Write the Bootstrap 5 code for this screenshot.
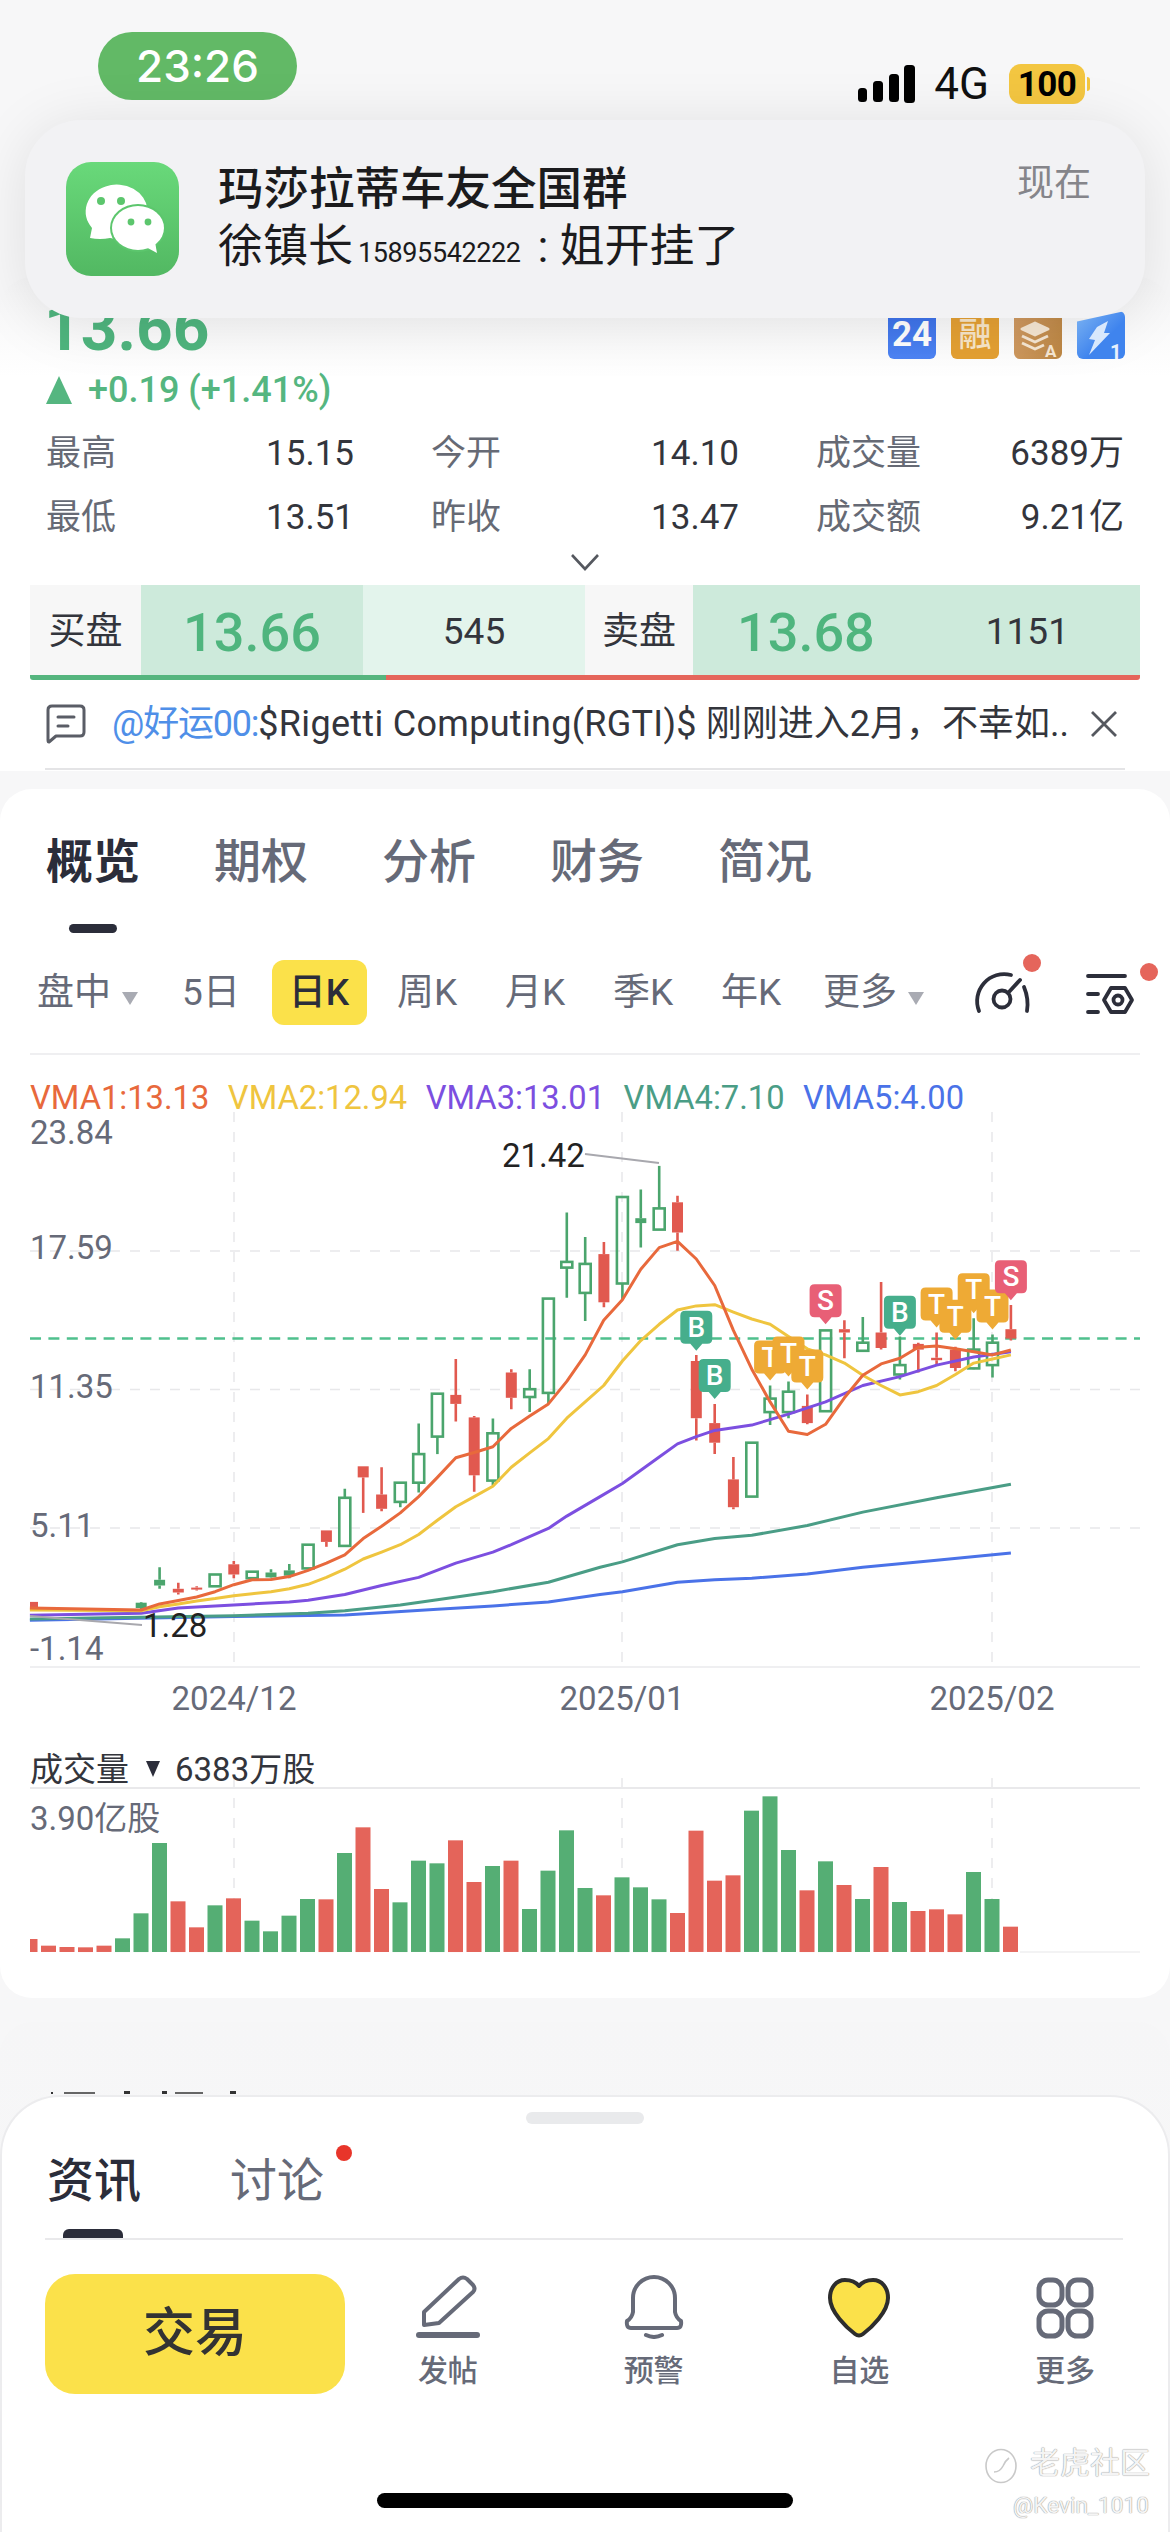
<!DOCTYPE html>
<html lang="zh">
<head>
<meta charset="UTF-8">
<title>RGTI</title>
<link href="https://cdn.jsdelivr.net/npm/bootstrap@5.3.0/dist/css/bootstrap.min.css" rel="stylesheet">
<style>
body { margin: 0; background: #f7f7f8; font-family: Roboto, "Noto Sans CJK SC", sans-serif; color: #333; }
.phone { position: relative; width: 1170px; height: 2532px; overflow: hidden; background: #f7f7f8; }

.status-row { height: 277px; padding: 32px 85px 0 98px; }
.clock-pill { width: 199px; height: 68px; border-radius: 34px; background: #62b966; color: #fff; font: 500 44px Inter, sans-serif; }
.status-right { margin-top: 26px; }
.net-text { font: 400 44px Roboto, sans-serif; color: #111; margin: 0 20px 0 18px; }
.batt { width: 76px; height: 40px; border-radius: 12px; background: #f3c641; font: 700 35px Roboto, sans-serif; color: #000; letter-spacing: -.5px; position: relative; }
.batt::after { content: ""; position: absolute; left: 78px; top: 13px; width: 3px; height: 14px; border-radius: 0 3px 3px 0; background: #f3c641; }

.notice { position: absolute; left: 25px; top: 120px; width: 1120px; height: 198px; z-index: 5; border-radius: 56px; background: #f2f2f4; box-shadow: 0 6px 60px rgba(0,0,0,.1); padding: 42px 54px 0 41px; }
.notice-icon { width: 113px; height: 114px; margin-right: 39px; flex: none; }
.notice-title { font-size: 45.5px; font-weight: 500; line-height: 56px; color: #1b1b1d; }
.notice-line { font-size: 45px; line-height: 54px; color: #1b1b1d; margin-top: 2px; }
.notice-num { font-size: 27px; letter-spacing: -.4px; margin: 0 17px 0 5px; }
.notice-time { font-size: 37px; color: #85858a; line-height: 44px; }

.panel { background: #fff; border-radius: 32px; }
.quote-panel { height: 494px; background: linear-gradient(#f5f5f6, #fff 100px); border-radius: 32px 32px 0 0; }
.price-row { height: 82px; padding: 22px 45px 0 44px; }
.price-big { font-size: 64px; font-weight: 700; line-height: 60px; color: #4fb57e; }
.tile-gap { gap: 15px; }
.tile { width: 48px; height: 48px; border-radius: 6px; color: #fff; font-weight: 700; font-size: 35px; }
.tile-blue { background: linear-gradient(#3c70e8, #4d84f4); }
.tile-orange { background: #e4a033; color: #f8e6c8; font-size: 33px; font-weight: 500; }
.tile-tan { background: linear-gradient(100deg, #d09a62, #bd8744); }
.tile-bolt { position: relative; z-index: 6; background: linear-gradient(135deg, #7db4f2, #3f84ee 60%); clip-path: polygon(0 22%, 100% 0, 100% 100%, 0 100%); }
.change-row { height: 36px; margin-top: 13px; padding-left: 46px; color: #55b680; font-size: 36px; font-weight: 500; }
.stat-grid { display: grid; grid-template-columns: repeat(3, 308px); column-gap: 77px; grid-auto-rows: 64px; padding: 14px 0 0 46px; font-size: 35px; align-items: center; }
.stat-name { color: #666a75; }
.stat-val { color: #33353c; }
.chev-row { height: 35px; padding-top: 3px; }
.book { margin: 0 30px; height: 90px; font-size: 37px; color: #33353c; padding: 0; }
.book-cell { padding-top: 4px; }
.book-label { background: #f7f7f7; }
.book-buy { width: 111px; }
.book-sell { width: 108px; }
.book-dark { background: #cdeadb; }
.book-bid { width: 222px; }
.book-pale { background: #e3f4ec; width: 222px; }
.book-ask { width: 447px; padding-left: 44px; }
.book-price { color: #4fb57e; font-size: 54px; font-weight: 500; }
.book-size { font-size: 37px; font-weight: 400; color: #33353c; }
.book-ask .book-size { margin-left: 111px; }
.book-line { margin: 0 30px; height: 5px; border-radius: 0 0 3px 3px; overflow: hidden; }
.line-buy { width: 356px; background: #55b57e; }
.line-sell { background: #e5655b; }
.news-row { margin: 0 45px; height: 90px; border-bottom: 2px solid #e4e4e6; font-size: 36px; color: #33353c; white-space: nowrap; }
.news-icon { margin: 0 26px 0 1px; flex: none; }
.news-close { margin-right: 7px; }
.at-name { color: #4f8fe8; letter-spacing: -1.2px; }
.ticker { letter-spacing: .3px; }

.chart-panel { height: 1209px; margin-top: 18px; }
.tab-row { padding: 37px 0 0 46px; gap: 74px; font-size: 47px; line-height: 72px; color: #666a78; font-weight: 500; }
.tab-on { color: #2b2d3a; font-weight: 700; }
.tab-bar { width: 48px; height: 9px; border-radius: 5px; background: #2b2d3a; margin: 26px 0 0 69px; }
.period-row { height: 65px; margin: 27px 30px 0 0; padding-left: 37px; font-size: 37px; color: #666a78; }
.period-first { width: 120px; }
.period-more { margin-left: 18px; }
.period-item { width: 108px; }
.period-on { width: 95px; height: 65px; border-radius: 12px; background: #fbe14a; color: #2b2d3a; font-weight: 500; }
.caret-down { display: inline-block; border: 8px solid transparent; border-top: 13px solid #a9abb3; border-bottom: 0; margin-left: 11px; }
.icon-gauge, .icon-tune { overflow: visible; }
.icon-tune { margin: 0 -25px 0 45px; }
.legend-row { margin: 28px 30px 0; border-top: 2px solid #efeff1; height: 59px; padding-top: 24px; gap: 18.5px; font-size: 32.7px; line-height: 38px; }
.vma1 { color: #e8693c; }
.vma2 { color: #efc53f; }
.vma3 { color: #7c4fe0; }
.vma4 { color: #4a9d86; }
.vma5 { color: #4a72e8; }
.chart-svg { display: block; width: 1170px; height: 848px; }
.chart-svg text { font-family: Roboto, "Noto Sans CJK SC", sans-serif; }

.peek-panel { height: 400px; margin-top: 24px; background: linear-gradient(#f6f6f7, #f8f8f9); position: relative; }
.peek-ticks { position: absolute; left: 0; top: 68px; }

.sheet { position: absolute; left: 0; top: 2095px; width: 1170px; height: 437px; z-index: 4; background: #fff; border: 2px solid #ececee; border-bottom: 0; border-radius: 60px 60px 0 0; }
.sheet-handle { width: 118px; height: 12px; border-radius: 6px; background: #e9eaec; margin: 15px 0 0 524px; }
.sheet-tabs { margin-top: 26px; padding-left: 45px; gap: 89px; font-size: 47px; line-height: 62px; color: #666a78; }
.sheet-on { color: #2b2d3a; font-weight: 500; }
.sheet-dot { position: absolute; left: 106px; top: -5px; width: 16px; height: 16px; border-radius: 50%; background: #e8352a; }
.sheet-bar { width: 60px; height: 9px; border-radius: 6px 6px 0 0; background: #2b2d3a; margin: 17px 0 0 61px; }
.sheet-rule { height: 2px; background: #e9e9eb; margin: 0 45px 0 43px; }
.tool-row { margin: 34px 0 0 43px; }
.trade-btn { width: 300px; height: 120px; border-radius: 30px; background: #fbe14a; border: 0; font-size: 52px; font-weight: 500; color: #333; flex: none; }
.tool-item { width: 206px; font-size: 30px; font-weight: 500; line-height: 38px; color: #666a78; }
.tool-item svg { display: block; width: 64px; height: 65px; margin-bottom: 13px; }
.home-bar { position: absolute; left: 377px; top: 2493px; width: 416px; height: 15px; border-radius: 8px; background: #000; z-index: 6; }
.mark-a, .mark-b { position: absolute; z-index: 6; color: #f4f4f4; text-shadow: 0 0 1px #9a9a9a, 0 0 1px #9a9a9a; white-space: nowrap; }
.mark-a { left: 1030px; top: 2442px; font-size: 30px; line-height: 42px; }
.mark-b { left: 1013px; top: 2492px; font-size: 22.6px; line-height: 28px; }
.mark-ring { position: absolute; left: 984px; top: 2448px; z-index: 6; }
</style>
</head>
<body>
<div class="phone">

  <div class="status-row d-flex justify-content-between align-items-start">
    <div class="clock-pill d-flex align-items-center justify-content-center">23:26</div>
    <div class="status-right d-flex align-items-center">
      <svg width="58" height="38" viewBox="0 0 58 38"><rect x="0" y="23" width="9" height="14" rx="3.5"/><rect x="15" y="16" width="10" height="21" rx="3.5"/><rect x="31" y="9" width="10" height="28" rx="3.5"/><rect x="46" y="0" width="11" height="38" rx="3.5"/></svg>
      <span class="net-text">4G</span>
      <span class="batt d-flex align-items-center justify-content-center">100</span>
    </div>
  </div>

  <div class="notice d-flex">
    <svg class="notice-icon" viewBox="0 0 113 114">
      <defs><linearGradient id="wx" x1="0" y1="0" x2="0" y2="1"><stop offset="0" stop-color="#69d97a"/><stop offset="1" stop-color="#52b862"/></linearGradient></defs>
      <rect width="113" height="114" rx="25" fill="url(#wx)"/>
      <path d="M24 76 L26 66 A31 27 0 1 1 44 76 Q34 78 24 76Z" fill="#fff"/>
      <ellipse cx="72" cy="66" rx="28" ry="24" fill="#5cc66d"/>
      <ellipse cx="72" cy="66" rx="26" ry="22" fill="#fff"/>
      <path d="M78 84 L91 91 L89 80Z" fill="#fff"/>
      <circle cx="35" cy="39" r="4" fill="#5cc66d"/><circle cx="55" cy="39" r="4" fill="#5cc66d"/>
      <circle cx="65" cy="60" r="3.4" fill="#5cc66d"/><circle cx="82" cy="60" r="3.4" fill="#5cc66d"/>
    </svg>
    <div class="flex-grow-1">
      <div class="notice-title">玛莎拉蒂车友全国群</div>
      <div class="notice-line">徐镇长<span class="notice-num">15895542222</span>: 姐开挂了</div>
    </div>
    <div class="notice-time">现在</div>
  </div>

  <div class="panel quote-panel">
    <div class="price-row d-flex justify-content-between align-items-end">
      <div class="price-big">13.66</div>
      <div class="tile-gap d-flex">
        <div class="tile tile-blue d-flex align-items-center justify-content-center">24</div>
        <div class="tile tile-orange d-flex align-items-center justify-content-center">融</div>
        <div class="tile tile-tan">
          <svg width="48" height="48" viewBox="0 0 48 48" fill="none" stroke="#f6e7d3" stroke-width="3" stroke-linejoin="round"><path d="M8 14 L21 8 L34 14 L21 20Z" fill="#f6e7d3"/><path d="M8 21 L21 27 L34 21"/><path d="M8 28 L21 34 L30 30"/><text x="31" y="42" font-size="17" font-weight="700" fill="#f6e7d3" stroke="none" font-family="Roboto, sans-serif">A</text></svg>
        </div>
        <div class="tile tile-bolt">
          <svg width="48" height="48" viewBox="0 0 48 48"><path d="M20 12 L31 6 L27 18 L33 18 L12 40 L18 25 L12 24Z" fill="#d8e8fc"/><text x="33" y="44" font-size="20" font-weight="700" fill="#e6f0fd" font-family="Roboto, sans-serif">1</text></svg>
        </div>
      </div>
    </div>
    <div class="change-row d-flex align-items-center">
      <svg width="26" height="28" viewBox="0 0 26 28" class="me-3"><path d="M13 0 L26 28 H0Z" fill="#55b680"/></svg>
      <span>+0.19 (+1.41%)</span>
    </div>
    <div class="stat-grid">
      <div class="d-flex justify-content-between"><span class="stat-name">最高</span><span class="stat-val">15.15</span></div>
      <div class="d-flex justify-content-between"><span class="stat-name">今开</span><span class="stat-val">14.10</span></div>
      <div class="d-flex justify-content-between"><span class="stat-name">成交量</span><span class="stat-val">6389万</span></div>
      <div class="d-flex justify-content-between"><span class="stat-name">最低</span><span class="stat-val">13.51</span></div>
      <div class="d-flex justify-content-between"><span class="stat-name">昨收</span><span class="stat-val">13.47</span></div>
      <div class="d-flex justify-content-between"><span class="stat-name">成交额</span><span class="stat-val">9.21亿</span></div>
    </div>
    <div class="chev-row d-flex justify-content-center">
      <svg width="30" height="18" viewBox="0 0 30 18" fill="none" stroke="#55585f" stroke-width="2.6"><path d="M2 2 L15 16 L28 2"/></svg>
    </div>
    <div class="book d-flex">
      <div class="book-cell book-label book-buy d-flex align-items-center justify-content-center">买盘</div>
      <div class="book-cell book-dark book-bid book-price d-flex align-items-center justify-content-center">13.66</div>
      <div class="book-cell book-pale book-size d-flex align-items-center justify-content-center">545</div>
      <div class="book-cell book-label book-sell d-flex align-items-center justify-content-center">卖盘</div>
      <div class="book-cell book-dark book-ask book-price d-flex align-items-center">13.68<span class="book-size">1151</span></div>
    </div>
    <div class="book-line d-flex">
      <div class="line-buy"></div>
      <div class="line-sell flex-grow-1"></div>
    </div>
    <div class="news-row d-flex align-items-center">
      <svg width="40" height="40" viewBox="0 0 40 40" fill="none" stroke="#5a5d66" stroke-width="3" class="news-icon"><path d="M6 2 H34 Q38 2 38 6 V28 Q38 32 34 32 H10 L3 38 Q2 38 2 36 V6 Q2 2 6 2Z" stroke-linejoin="round"/><path d="M12 13 H28 M12 22 H22" stroke-linecap="round"/></svg>
      <span><span class="at-name">@好运00:</span><span class="ticker">$Rigetti Computing(RGTI)$</span> 刚刚进入2月，不幸如..</span>
      <svg width="28" height="28" viewBox="0 0 28 28" class="news-close ms-auto" stroke="#55585f" stroke-width="2.8"><path d="M2 2 L26 26 M26 2 L2 26"/></svg>
    </div>
  </div>

  <div class="panel chart-panel position-relative">
    <div class="tab-row d-flex">
      <span class="tab-on">概览</span><span>期权</span><span>分析</span><span>财务</span><span>简况</span>
    </div>
    <div class="tab-bar"></div>
    <div class="period-row d-flex align-items-center">
      <span class="period-first">盘中<i class="caret-down"></i></span>
      <span class="period-item text-center">5日</span>
      <span class="period-item d-flex justify-content-center"><span class="period-on d-flex align-items-center justify-content-center">日K</span></span>
      <span class="period-item text-center">周K</span>
      <span class="period-item text-center">月K</span>
      <span class="period-item text-center">季K</span>
      <span class="period-item text-center">年K</span>
      <span class="period-more">更多<i class="caret-down"></i></span>
      <svg width="72" height="65" viewBox="0 0 72 65" class="icon-gauge ms-auto" fill="none" stroke="#2c2e3a" stroke-width="3.8" stroke-linecap="round">
        <path d="M11 51 A27 27 0 0 1 43 15"/><path d="M56 27 Q61 39 59 51"/>
        <circle cx="34" cy="39" r="8.5"/><path d="M40 33 L52 20"/>
        <circle cx="64" cy="3" r="9" fill="#e5655b" stroke="none"/>
      </svg>
      <svg width="80" height="65" viewBox="0 0 80 65" class="icon-tune" fill="none" stroke="#2c2e3a" stroke-width="3.8" stroke-linecap="round">
        <path d="M3 16 H40 M3 34 H13 M3 52 H13"/>
        <path d="M19 40 L26 28 H40 L47 40 L40 52 H26Z" stroke-linejoin="round"/><circle cx="33" cy="40" r="4.5"/>
        <circle cx="64" cy="12" r="9" fill="#e5655b" stroke="none"/>
      </svg>
    </div>
    <div class="legend-row d-flex">
      <span class="vma1">VMA1:13.13</span>
      <span class="vma2">VMA2:12.94</span>
      <span class="vma3">VMA3:13.01</span>
      <span class="vma4">VMA4:7.10</span>
      <span class="vma5">VMA5:4.00</span>
    </div>
    <svg id="chart" class="chart-svg" viewBox="0 1113 1170 848"></svg>
  </div>

  <div class="panel peek-panel">
    <svg class="peek-ticks" width="260" height="6" fill="#333"><rect x="51" y="2" width="2" height="2"/><rect x="64" y="2" width="31" height="2" fill="#666"/><rect x="124" y="1" width="6" height="3"/><rect x="162" y="1" width="5" height="3"/><rect x="175" y="2" width="28" height="2" fill="#666"/><rect x="230" y="1" width="6" height="3"/></svg>
  </div>

  <div class="sheet">
    <div class="sheet-handle"></div>
    <div class="sheet-tabs d-flex">
      <span class="sheet-on">资讯</span>
      <span class="position-relative">讨论<i class="sheet-dot"></i></span>
    </div>
    <div class="sheet-bar"></div>
    <div class="sheet-rule"></div>
    <div class="tool-row d-flex">
      <button class="btn trade-btn" type="button">交易</button>
      <div class="tool-item d-flex flex-column align-items-center">
        <svg viewBox="0 0 64 65" fill="none" stroke="#666a78" stroke-width="4" stroke-linejoin="round" stroke-linecap="round"><path d="M8 38 L43 5 Q47 2 51 5 L57 11 Q60 15 57 18 L23 49 L8 51Z"/><path d="M3 61 H61" stroke-width="6"/></svg>
        发帖
      </div>
      <div class="tool-item d-flex flex-column align-items-center">
        <svg viewBox="0 0 64 65" fill="none" stroke="#666a78" stroke-width="4" stroke-linecap="round" stroke-linejoin="round"><path d="M11 24 A21 21 0 0 1 53 24 V38 Q54 44 59 47 Q60 54 55 54 H9 Q4 54 5 47 Q10 44 11 38Z"/><path d="M24 61 Q32 65 40 61"/></svg>
        预警
      </div>
      <div class="tool-item d-flex flex-column align-items-center">
        <svg viewBox="0 0 64 65"><path d="M32 12 C28 7 23 6 18 6 C9 6 3 14 3 24 C3 38 20 54 28 60 Q32 63 36 60 C44 54 61 38 61 24 C61 14 55 6 46 6 C41 6 36 7 32 12Z" fill="#fbe14a" stroke="#2d2d2d" stroke-width="4" stroke-linejoin="round"/></svg>
        自选
      </div>
      <div class="tool-item d-flex flex-column align-items-center">
        <svg viewBox="0 0 64 65" fill="none" stroke="#666a78" stroke-width="5"><rect x="6" y="6" width="23" height="25" rx="9"/><rect x="35" y="6" width="23" height="25" rx="9"/><rect x="6" y="37" width="23" height="25" rx="9"/><rect x="35" y="37" width="23" height="25" rx="9"/></svg>
        更多
      </div>
    </div>
  </div>

  <svg class="mark-ring" width="34" height="36" viewBox="0 0 34 36" fill="none" stroke="#c9c9c9" stroke-width="1.6"><ellipse cx="17" cy="18" rx="15" ry="16.5"/><path d="M10 24 Q16 24 19 18 Q21 13 25 10"/></svg>
  <div class="mark-a">老虎社区</div>
  <div class="mark-b">@Kevin_1010</div>
  <div class="home-bar"></div>
</div>

<script src="https://cdn.jsdelivr.net/npm/bootstrap@5.3.0/dist/js/bootstrap.bundle.min.js"></script>
<script>
// crop coords from the reference -> page px
const px = v => +(v / 2.613).toFixed(1);
const py = v => +(1060 + v / 2.45).toFixed(1);
const c4 = 1489.4; // right half offset

// [x, wickTop, wickBot, bodyTop, bodyBot, colour]
const candles = [
  [85,1330,1350,1330,1350,'r'],[369,1330,1348,1332,1345,'f'],[417,1245,1298,1276,1290,'f'],[466,1283,1312,1298,1307,'r'],
  [514,1292,1302,1295,1300,'r'],[562,1263,1292,1263,1292,'g'],[611,1230,1272,1238,1263,'r'],[659,1256,1272,1256,1272,'g'],
  [708,1250,1272,1258,1270,'f'],[756,1237,1272,1253,1266,'f'],[805,1190,1248,1190,1248,'g'],[853,1155,1195,1155,1183,'r'],
  [901,1053,1195,1075,1193,'g'],[949,998,1112,998,1025,'r'],[997,1000,1108,1067,1102,'r'],[1046,1038,1098,1038,1085,'g'],
  [1094,893,1062,968,1038,'g'],[1143,820,968,820,925,'g'],[1191,735,888,823,845,'r'],[1239,875,1060,878,1020,'r'],
  [1288,881,1045,917,1033,'g'],[1336,760,858,768,830,'r'],[1384,760,865,809,828,'g'],[1433,587,845,587,818,'g'],
  [1481,376,585,497,511,'g'],[1529,436,642,502,573,'g'],[1578,448,608,478,596,'r']
];
const candlesRight = [
  [137,338,590,338,550,'g'],[185,320,462,390,402,'f'],[233,262,418,366,418,'g'],[281,335,470,351,425,'r'],
  [330,725,935,740,880,'r'],[378,845,968,892,940,'r'],[427,975,1103,1030,1098,'r'],[475,940,1072,940,1072,'g'],
  [523,800,897,832,865,'g'],[571,790,880,815,865,'g'],[620,822,895,850,892,'r'],[668,665,863,665,863,'g'],
  [717,640,733,662,670,'r'],[765,632,715,695,715,'g'],[813,546,712,670,708,'r'],[862,680,785,750,773,'g'],
  [910,695,768,698,712,'r'],[958,670,752,732,738,'r'],[1007,705,765,712,757,'r'],[1055,635,760,712,758,'g'],
  [1104,675,780,695,750,'g'],[1152,603,690,662,685,'r']
];
candlesRight.forEach(c => { c[0] += c4; candles.push(c); });

const lines = {
  '#4a72e8': [[78,1375],[611,1366],[901,1362],[1143,1348],[1288,1340],[1433,1330],[1568,1312],[137,1305,1],[281,1282,1],[378,1276,1],[475,1272,1],[620,1262,1],[765,1245,1],[958,1228,1],[1152,1210,1]],
  '#4a9d86': [[78,1372],[611,1364],[805,1358],[901,1352],[1046,1338],[1143,1325],[1288,1305],[1433,1282],[1568,1245],[137,1232,1],[281,1190,1],[378,1175,1],[475,1167,1],[620,1143,1],[765,1110,1],[958,1075,1],[1152,1042,1]],
  '#7c4fe0': [[78,1363],[369,1358],[466,1345],[562,1340],[659,1335],[756,1330],[805,1326],[901,1312],[997,1290],[1094,1270],[1191,1235],[1288,1208],[1336,1190],[1433,1150],[1481,1120],[1568,1072],[137,1040,1],[233,975,1],[281,943,1],[330,925,1],[378,910,1],[475,897,1],[571,870,1],[668,840,1],[765,800,1],[862,778,1],[958,750,1],[1055,730,1],[1152,717,1]],
  '#efc53f': [[78,1350],[369,1352],[417,1342],[466,1335],[514,1328],[562,1322],[611,1315],[659,1310],[708,1305],[756,1298],[805,1287],[853,1270],[901,1250],[949,1225],[997,1208],[1046,1190],[1094,1165],[1143,1130],[1191,1097],[1239,1072],[1288,1047],[1336,1000],[1384,965],[1433,930],[1481,880],[1529,840],[88,800,1],[137,740,1],[185,690,1],[233,650,1],[281,615,1],[330,605,1],[378,602,1],[427,620,1],[475,637,1],[523,650,1],[571,680,1],[620,710,1],[668,725,1],[717,745,1],[765,775,1],[813,800,1],[862,823,1],[910,815,1],[958,800,1],[1007,773,1],[1055,745,1],[1104,735,1],[1152,725,1]],
  '#e8693c': [[78,1345],[369,1350],[417,1335],[466,1327],[514,1318],[562,1305],[611,1288],[659,1276],[708,1275],[756,1268],[805,1253],[853,1235],[901,1215],[949,1175],[997,1145],[1046,1112],[1094,1072],[1143,1025],[1191,977],[1239,964],[1288,950],[1336,905],[1384,875],[1433,845],[1481,790],[1529,725],[88,640,1],[137,590,1],[185,515,1],[233,462,1],[281,447,1],[330,490,1],[378,555,1],[427,665,1],[475,760,1],[523,840,1],[571,912,1],[620,920,1],[668,895,1],[717,830,1],[765,775,1],[813,747,1],[862,733,1],[910,706,1],[958,703,1],[1007,710,1],[1055,717,1],[1104,725,1],[1152,713,1]]
};

// [letter, x (right crop), box top]
const flags = [['B',330,617],['B',378,735],['T',523,690],['T',571,680],['T',620,712],['S',668,552],['B',862,580],['T',958,560],['T',1007,590],['T',1055,525],['T',1104,565],['S',1152,493]];
const flagColour = { B: '#46ae8c', T: '#eeaa35', S: '#e85f76' };

const volTops = [720,740,744,745,740,718,643,432,607,685,619,598,665,697,650,600,601,462,385,570,610,485,493,424,549,501,485,630,515,394,567,589,535,565,601,642,395,545,529,335,292,453,574,487,558,600,504,609,636,631,646,519,600,683];
const volSide = 'rrrrrgggrrgrggggrgrrgggrrgrggggrgggrrrrgggrgrgrgrrrggr';

let s = '<defs><clipPath id="plot"><rect x="30" y="1113" width="1110" height="860"/></clipPath></defs>';
const text = (x, y, t, fill, size, anchor) => `<text x="${x}" y="${y}" fill="${fill}" font-size="${size}" text-anchor="${anchor || 'start'}" dominant-baseline="central">${t}</text>`;

// grid
s += '<path d="M30 1668 H1140" stroke="#efeff1" stroke-width="2"/>';
[1252, 1390.5, 1529].forEach(y => { s += `<path d="M30 ${y} H1140" stroke="#e8e8ea" stroke-width="1.5" stroke-dasharray="10 10"/>`; });
[234, 622, 992].forEach(x => {
  s += `<path d="M${x} 1113 V1668" stroke="#e8e8ea" stroke-width="1.5" stroke-dasharray="10 10"/>`;
  s += `<path d="M${x} 1779 V1953" stroke="#e8e8ea" stroke-width="1.5" stroke-dasharray="10 10"/>`;
});
s += '<path d="M30 1339.5 H1140" stroke="#4fc08d" stroke-width="2.6" stroke-dasharray="11 7.4"/>';

// candles
s += '<g clip-path="url(#plot)">';
candles.forEach(c => {
  const x = px(c[0]), col = c[5] === 'r' ? '#e1594f' : '#4ba56d';
  const wt = py(c[1]), wb = py(c[2]), bt = py(c[3]), bb = py(c[4]);
  s += `<path d="M${x} ${wt} V${bt} M${x} ${bb} V${wb}" stroke="${col}" stroke-width="2.6"/>`;
  if (c[5] === 'g') s += `<rect x="${x - 5.5}" y="${bt}" width="11" height="${(bb - bt).toFixed(1)}" fill="none" stroke="${col}" stroke-width="2.6"/>`;
  else s += `<rect x="${x - 5.5}" y="${bt}" width="11" height="${(bb - bt).toFixed(1)}" fill="${col}"/>`;
});
s += '</g>';

// moving averages
Object.keys(lines).forEach(col => {
  const pts = lines[col].map(p => px(p[2] ? p[0] + c4 : p[0]) + ',' + py(p[1])).join(' ');
  s += `<polyline points="${pts}" fill="none" stroke="${col}" stroke-width="3" stroke-linejoin="round"/>`;
});

// trade flags
flags.forEach(f => {
  const x = px(f[1] + c4), top = py(f[2]), col = flagColour[f[0]];
  s += `<path d="M${x - 16} ${top + 5} q0 -5 5 -5 h22 q5 0 5 5 v23 q0 5 -5 5 h-5 l-6 7 l-6 -7 h-5 q-5 0 -5 -5z" fill="${col}"/>`;
  s += text(x, top + 16.5, f[0], '#fff', 28, 'middle').replace('<text', '<text font-weight="500"');
});

// labels and extremes
[['23.84', 1133], ['17.59', 1248.5], ['11.35', 1387], ['5.11', 1526], ['-1.14', 1649]].forEach(a => { s += text(30, a[1], a[0], '#666a78', 33); });
s += text(502, 1156, '21.42', '#222', 33) + text(143, 1626, '1.28', '#222', 33);
s += '<path d="M585 1155 L659 1164" stroke="#a8a8ae" stroke-width="2"/><path d="M30 1617 L142 1626" stroke="#a8a8ae" stroke-width="2"/>';
[['2024/12', 234], ['2025/01', 622], ['2025/02', 992]].forEach(a => { s += text(a[1], 1699, a[0], '#666a78', 33, 'middle'); });

// volume
s += text(30, 1770, '成交量', '#33353c', 33);
s += '<path d="M146 1762 H160 L153 1778Z" fill="#2b2d3a"/>';
s += text(175, 1770, '6383万股', '#33353c', 33);
s += '<path d="M30 1789 H1140" stroke="#e9e9eb" stroke-width="2"/>';
s += text(30, 1819, '3.90亿股', '#666a78', 33);
s += '<path d="M1020 1953 H1140" stroke="#efeff1" stroke-width="1.5"/>';
s += '<g clip-path="url(#plot)">';
volTops.forEach((t, i) => {
  const x = 30 + i * 18.5 - 7.5, y = 1700 + t / 3;
  s += `<rect x="${x}" y="${y}" width="15" height="${(1953 - y).toFixed(1)}" fill="${volSide[i] === 'r' ? '#e4645a' : '#55ae74'}"/>`;
});
s += '</g>';
document.getElementById('chart').innerHTML = s;
</script>
</body>
</html>
